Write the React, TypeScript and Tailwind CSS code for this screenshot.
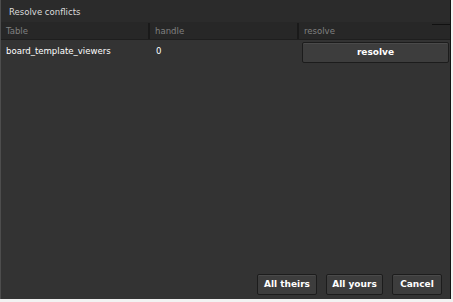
import React from "react";

const font = { fontFamily: '"DejaVu Sans Condensed", "DejaVu Sans", Verdana, sans-serif' };
const btnFont = { fontFamily: '"DejaVu Sans", Verdana, sans-serif' };

function Btn({ label, className }: { label: string; className: string }) {
  return (
    <button
      style={btnFont}
      className={`h-[21px] rounded-[2px] border border-[#1c1c1c] bg-[#3d3d3d] text-[9px] font-bold text-white shadow-[inset_0_1px_0_#4a4a4a] ${className}`}
    >
      {label}
    </button>
  );
}

export default function App() {
  return (
    <div className="w-[453px] h-[302px] bg-[#f2f2f2] overflow-hidden" style={font}>
      <div className="w-[451px] h-[299px] bg-[#333333] border-l border-[#4d4d4d] border-r border-r-[#151515] flex flex-col">
        <div className="h-[22px] pt-[2px] bg-[#2b2b2b] flex items-center pl-[8px] text-[9.5px] text-[#dcdcdc]">
          Resolve conflicts
        </div>
        <div className="h-[18px] pt-[1px] bg-[#272727] border-b border-[#1e1e1e] flex text-[9.5px] text-[#808080] relative">
          <div className="w-[149px] pl-[5px] flex items-center border-r-2 border-[#1a1a1a]">Table</div>
          <div className="w-[149px] pl-[5px] flex items-center border-r-2 border-[#1a1a1a]">handle</div>
          <div className="flex-1 pl-[5px] flex items-center">resolve</div>
          <div className="absolute right-0 top-[2px] w-[18px] h-[1px] bg-[#111]" />
        </div>
        <div className="h-[22px] pt-[1px] flex items-center text-[9.5px] text-white">
          <div className="w-[150px] pl-[5px]">board_template_viewers</div>
          <div className="w-[150px] pl-[5px]">0</div>
          <div className="flex-1 pl-[1px] pr-[1px] pt-[2px]">
            <Btn label="resolve" className="w-full h-[18px] bg-[#3a3a3a]" />
          </div>
        </div>
        <div className="flex-1" />
        <div className="flex justify-end gap-[9px] pr-[8px] pb-[4px]">
          <Btn label="All theirs" className="w-[60px]" />
          <Btn label="All yours" className="w-[57px]" />
          <Btn label="Cancel" className="w-[50px]" />
        </div>
      </div>
    </div>
  );
}
